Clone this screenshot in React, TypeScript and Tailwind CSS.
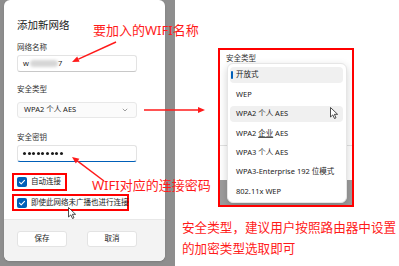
import React from 'react'

const menuItems = ['开放式', 'WEP', 'WPA2 个人 AES', 'WPA2 企业 AES', 'WPA3 个人 AES', 'WPA3-Enterprise 192 位模式', '802.11x WEP']

function Check() {
  return (
    <div className="w-[10px] h-[10px] rounded-[2px] bg-[#005fb8] flex items-center justify-center shrink-0">
      <svg width="8" height="8" viewBox="0 0 8 8">
        <path d="M1.5 4.2 L3.2 5.8 L6.5 2.3" fill="none" stroke="#fff" strokeWidth="1.1" strokeLinecap="round" strokeLinejoin="round" />
      </svg>
    </div>
  )
}

function Cursor({ className }: { className: string }) {
  return (
    <svg className={className} width="9" height="12" viewBox="0 0 9 12">
      <path d="M0.5 0.5 L0.5 10 L2.8 7.9 L4.5 11.5 L6 10.8 L4.4 7.3 L7.6 7.3 Z" fill="#fff" stroke="#222" strokeWidth="0.8" strokeLinejoin="round" />
    </svg>
  )
}

export default function App() {
  return (
    <div className="relative w-[399px] h-[266px] overflow-hidden flex bg-white font-['Noto_Sans','Noto_Sans_CJK_SC',sans-serif]">
      {/* dialog screenshot */}
      <div className="w-[175px] h-full bg-[#8e8e8e] pl-[4px] shrink-0">
        <div className="w-[161px] h-[261px] bg-white rounded-md flex flex-col overflow-hidden shadow-sm">
          <div className="flex-1 flex flex-col px-[13px] pt-[17px] text-[#1b1b1b]">
            <div className="text-[10.5px] leading-[16px]">添加新网络</div>
            <div className="mt-[8px] text-[7.5px] leading-[12px] text-[#333]">网络名称</div>
            <div className="mt-[2px] h-[17px] w-[120px] rounded-[3px] border border-[#e3e3e3] border-b-[#c8c8c8] flex items-center pl-[5px] text-[7.5px]">
              <span>w</span>
              <span className="ml-[1px] w-[28px] h-[7px] rounded-full bg-[#d6d6d6] blur-[1.5px]" />
              <span>7</span>
            </div>
            <div className="mt-[11px] text-[7.5px] leading-[12px] text-[#333]">安全类型</div>
            <div className="mt-[7px] h-[16px] w-[120px] rounded-[3px] border border-[#e8e8e8] bg-[#fbfbfb] flex items-center justify-between pl-[6px] pr-[8px] text-[7.5px]">
              <span>WPA2 个人 AES</span>
              <svg width="6" height="4" viewBox="0 0 6 4">
                <path d="M0.8 0.8 L3 3 L5.2 0.8" fill="none" stroke="#777" strokeWidth="0.7" />
              </svg>
            </div>
            <div className="mt-[13px] text-[7.5px] leading-[12px] text-[#333]">安全密钥</div>
            <div className="mt-[2px] h-[17px] w-[120px] rounded-[3px] border border-[#e3e3e3] border-b-[#005fb8] flex items-center gap-[1.6px] pl-[5px]">
              {Array.from({ length: 9 }).map((_, i) => (
                <div key={i} className="w-[3px] h-[3px] rounded-full bg-[#1b1b1b]" />
              ))}
            </div>
            <div className="mt-[11px] -ml-[5px] w-[55px] h-[18px] border-2 border-[#ff0000] flex items-center gap-[4px] pl-[3px] text-[7.5px]">
              <Check />
              <span>自动连接</span>
            </div>
            <div className="mt-[3px] -ml-[5px] w-[117px] h-[17px] border-2 border-[#ff0000] flex items-center gap-[4px] pl-[3px] text-[7.5px] whitespace-nowrap">
              <Check />
              <span>即使此网络未广播也进行连接</span>
            </div>
          </div>
          <div className="h-[42px] bg-[#f3f3f3] border-t border-[#e8e8e8] flex items-start gap-[20px] pt-[11px] px-[13px]">
            <div className="w-[50px] h-[16px] rounded-[3px] bg-white border border-[#e3e3e3] flex items-center justify-center text-[7.5px] text-[#1b1b1b]">保存</div>
            <div className="w-[50px] h-[16px] rounded-[3px] bg-white border border-[#e3e3e3] flex items-center justify-center text-[7.5px] text-[#1b1b1b]">取消</div>
          </div>
        </div>
      </div>

      {/* right side */}
      <div className="flex-1 flex flex-col">
        <div className="mt-[48px] ml-[43px] w-[136px] h-[159px] border-2 border-[#ff0000] bg-white relative flex flex-col overflow-hidden">
          <div className="pl-[6px] pt-[2px] text-[7.5px] leading-[12px] text-[#333]">安全类型</div>
          <div className="mt-[81px] h-px bg-[#e2e2e2]" />
          <div className="flex-1" />
          <div className="h-[25px] bg-[#9c9c9c]" />
          <div className="absolute left-[7px] top-[13px] w-[120px] h-[140px] bg-white rounded-[6px] border border-[#e6e6e6] shadow-[0_3px_8px_rgba(0,0,0,0.18)] flex flex-col gap-[3.4px] pt-[3px] pl-[2px] pr-[3px]">
            {menuItems.map((item, i) => (
              <div key={item} className={`relative h-[16px] rounded-[4px] flex items-center pl-[6px] text-[7.5px] text-[#1b1b1b] whitespace-nowrap ${i === 0 || i === 2 ? 'bg-[#f0f0f0]' : ''}`}>
                {i === 0 && <div className="absolute left-[1px] top-[4px] w-[2px] h-[8px] rounded-full bg-[#005fb8]" />}
                {item === 'WPA2 企业 AES' ? (
                  <span>WPA2 <span className="underline decoration-[#555]">企业</span> AES</span>
                ) : (
                  <span>{item}</span>
                )}
                {i === 2 && <Cursor className="absolute right-[4px] top-[1px]" />}
              </div>
            ))}
          </div>
        </div>
        <div className="mt-[9.5px] ml-[7px] text-[12.6px] leading-[21px] text-[#ff1a1a] whitespace-nowrap">
          <div>安全类型，建议用户按照路由器中设置</div>
          <div>的加密类型选取即可</div>
        </div>
      </div>

      {/* annotations */}
      <div className="absolute left-[93px] top-[21px] text-[13px] leading-[18px] text-[#ff1a1a] whitespace-nowrap">要加入的WIFI名称</div>
      <div className="absolute left-[92px] top-[176px] text-[13px] leading-[18px] text-[#ff1a1a] whitespace-nowrap">WIFI对应的连接密码</div>
      <Cursor className="absolute left-[68px] top-[207px]" />
      <svg className="absolute left-0 top-0 pointer-events-none" width="399" height="266" viewBox="0 0 399 266">
        <g stroke="#ff1a1a" strokeWidth="1.5" fill="#ff1a1a">
          <line x1="116" y1="42" x2="78.4" y2="59.1" />
          <polygon points="72,62 79.6,61.8 77.2,56.4" stroke="none" />
          <line x1="104" y1="181" x2="77.6" y2="161.2" />
          <polygon points="72,157 79.4,158.8 75.8,163.6" stroke="none" />
          <line x1="144" y1="110" x2="198" y2="110" />
          <polygon points="205,110 198,107 198,113" stroke="none" />
        </g>
      </svg>
    </div>
  )
}
